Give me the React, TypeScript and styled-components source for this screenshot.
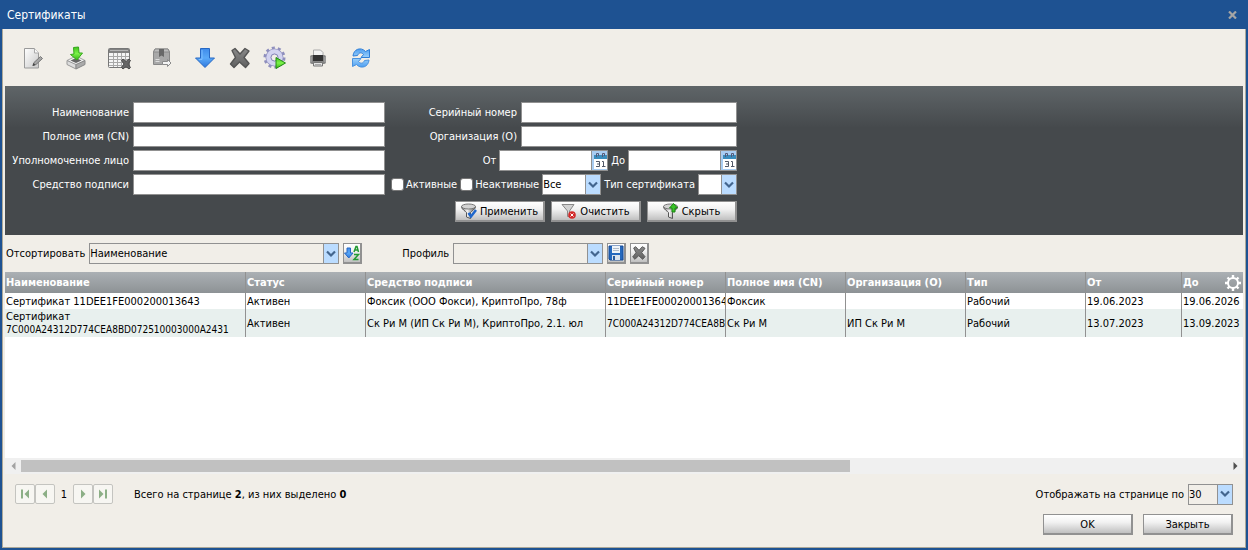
import React from "react";
import styled, { createGlobalStyle, css } from "styled-components";

const GlobalStyle = createGlobalStyle`
  *, *::before, *::after { box-sizing: border-box; }
  body {
    margin: 0;
    background: #1e5292;
    color: #000;
  }
  body, input, select, button, table {
    font-family: Tahoma, "DejaVu Sans Condensed", "Noto Sans", sans-serif;
    font-size: 11px;
    line-height: 13px;
  }
`;

/* ---------- window ---------- */

const Window = styled.div`
  display: flex;
  flex-direction: column;
  min-height: 100vh;
  padding: 0 2px 2px;
  background: #1e5292;
`;

const TitleBar = styled.header`
  display: flex;
  align-items: center;
  justify-content: space-between;
  height: 29px;
  padding: 0 9px 0 5px;
  color: #fff;
`;

const Title = styled.h1`
  margin: 0;
  font-size: 12px;
  line-height: 16px;
  font-weight: normal;
`;

const CloseButton = styled.button`
  display: flex;
  padding: 0;
  border: 0;
  background: none;
`;

const Content = styled.main`
  display: flex;
  flex: 1;
  flex-direction: column;
  padding: 0 2px;
  border: 1px solid #aca899;
  border-top: 0;
  background: #f1eee8;
`;

/* ---------- toolbar ---------- */

const Toolbar = styled.div`
  display: flex;
  align-items: center;
  height: 57px;
  padding-left: 16px;
`;

const ToolGroup = styled.div<{ $step: number; $after: number }>`
  display: grid;
  grid-auto-flow: column;
  grid-auto-columns: ${(p) => p.$step}px;
  margin-right: ${(p) => p.$after}px;
`;

const ToolButton = styled.button`
  display: flex;
  width: 24px;
  height: 24px;
  padding: 0;
  border: 0;
  background: none;
`;

/* ---------- filter ---------- */

const FilterPanel = styled.form`
  display: flex;
  align-items: flex-start;
  gap: 5px;
  min-height: 149px;
  padding-top: 16px;
  background: linear-gradient(#5f6568, #45494c 42px);
  color: #fff;
`;

const FilterColumn = styled.div<{ $width: number }>`
  display: flex;
  flex-direction: column;
  gap: 3px;
  width: ${(p) => p.$width}px;
`;

const FilterRow = styled.div<{ $gap?: number }>`
  display: flex;
  align-items: center;
  justify-content: flex-end;
  gap: ${(p) => p.$gap ?? 4}px;
  height: 21px;
`;

const Label = styled.label`
  white-space: nowrap;
`;

const TextInput = styled.input<{ $width: number }>`
  width: ${(p) => p.$width}px;
  height: 21px;
  padding: 0 1px;
  border: 1px solid #919191;
  border-radius: 0;
  background: #fff;
`;

const DateBox = styled.span`
  display: flex;
  width: 109px;
  height: 21px;
  border: 1px solid #919191;
  background: #fff;
`;

const DateInput = styled.input`
  flex: 1;
  min-width: 0;
  padding: 0 1px;
  border: 0;
  background: none;
`;

const DateButton = styled.button`
  display: flex;
  width: 16px;
  padding: 0;
  border: 0;
  border-left: 1px solid #919191;
  background: #a9cdf2;
`;

const CheckLabel = styled.label`
  display: flex;
  align-items: center;
  gap: 2px;
  white-space: nowrap;
`;

const CheckBox = styled.input`
  appearance: none;
  width: 13px;
  height: 13px;
  margin: 0;
  border: 1px solid #767676;
  border-radius: 3px;
  background: #fff;
`;

const SelectBox = styled.span<{ $width: number }>`
  position: relative;
  display: flex;
  width: ${(p) => p.$width}px;
  height: 21px;
`;

const NativeSelect = styled.select<{ $white?: boolean }>`
  appearance: none;
  width: 100%;
  padding: 0 17px 0 0;
  border: 1px solid #919191;
  border-radius: 0;
  background: ${(p) => (p.$white ? "#fff" : "#f1eee8")};
  color: #000;
`;

const SelectArrow = styled.span`
  position: absolute;
  top: 0;
  right: 0;
  display: flex;
  align-items: center;
  justify-content: center;
  width: 16px;
  height: 21px;
  border: 1px solid #919191;
  background: #bbdcff;
  pointer-events: none;
`;

const ButtonRow = styled.div`
  display: flex;
  justify-content: flex-end;
  gap: 6px;
  padding-top: 3px;
`;

const PushButton = styled.button`
  display: flex;
  align-items: center;
  justify-content: center;
  gap: 3px;
  width: 90px;
  height: 21px;
  padding: 0;
  border: solid #919191;
  border-width: 1px 2px 2px 1px;
  background: linear-gradient(#fff, #f2f2f2 40%, #c0c0c0);
  color: #000;
  white-space: nowrap;
`;

const IconButton = styled(PushButton)`
  width: 19px;
`;

/* ---------- sorting ---------- */

const SortBar = styled.div`
  display: flex;
  align-items: center;
  height: 37px;
`;

const SortGroup = styled.div`
  display: flex;
  align-items: center;
  gap: 4px;
  margin-right: 39px;
  padding-left: 1px;
`;

/* ---------- table ---------- */

const TableArea = styled.section`
  position: relative;
  flex: 1;
  overflow: hidden;
  background: #fff;
`;

const Table = styled.table`
  width: 100%;
  table-layout: fixed;
  border-collapse: separate;
  border-spacing: 0;
`;

const cellBase = css`
  padding: 0 0 0 1px;
  border-right: 1px solid #919191;
  overflow: hidden;
  text-align: left;
  white-space: nowrap;
  &:last-child { border-right: 0; }
`;

const HeadCell = styled.th`
  ${cellBase}
  height: 21px;
  color: #fff;
  font-weight: bold;
`;

const HeadRow = styled.tr`
  background: linear-gradient(#abb0b4, #8d9295);
`;

const BodyRow = styled.tr<{ $tall?: boolean }>`
  height: ${(p) => (p.$tall ? 28 : 16)}px;
  background: ${(p) => (p.$tall ? "#e8f0ee" : "#fff")};
`;

const Cell = styled.td<{ $wrap?: boolean }>`
  ${cellBase}
  ${(p) => p.$wrap && "white-space: normal;"}
`;

const Serial = styled.span<{ $long?: boolean }>`
  font-size: ${(p) => (p.$long ? 10 : 11)}px;
`;

const SettingsButton = styled.button`
  position: absolute;
  top: 2px;
  right: 1px;
  display: flex;
  padding: 0;
  border: 0;
  background: none;
`;

const ScrollBar = styled.div`
  display: grid;
  grid-template-columns: 16px 1fr 16px;
  align-items: center;
  height: 16px;
  background: #f0f0f0;
`;

const ScrollButton = styled.button`
  display: flex;
  align-items: center;
  justify-content: center;
  height: 16px;
  padding: 0;
  border: 0;
  background: none;
`;

const ScrollThumb = styled.div`
  width: 68.75%;
  height: 12px;
  background: #c1c1c1;
`;

/* ---------- footer ---------- */

const Footer = styled.footer`
  display: flex;
  align-items: center;
  justify-content: space-between;
  height: 40px;
  padding: 0 10px;
`;

const FooterGroup = styled.div`
  display: flex;
  align-items: center;
  gap: 4px;
`;

const Pager = styled.nav`
  display: flex;
  align-items: center;
  margin-right: 17px;
`;

const PageButton = styled.button`
  display: flex;
  align-items: center;
  justify-content: center;
  width: 20px;
  height: 20px;
  padding: 0;
  border: 1px solid #c4c4c0;
  border-radius: 2px;
  background: #f7f6f2;
`;

const PageNumber = styled.span`
  width: 18px;
  text-align: center;
`;

const Actions = styled.div`
  display: flex;
  justify-content: flex-end;
  gap: 10px;
  height: 33px;
  padding-right: 10px;
`;

/* ---------- icons ---------- */

const Svg = ({ w = 24, h = w, box, children }: { w?: number; h?: number; box?: string; children: React.ReactNode }) => (
  <svg width={w} height={h} viewBox={box ?? `0 0 ${w} ${h}`} aria-hidden="true">{children}</svg>
);

const HiddenSvg = styled.svg`
  position: absolute;
`;

const Gradients = () => (
  <HiddenSvg width="0" height="0" aria-hidden="true">
    <defs>
      <linearGradient id="gBlue" x1="0" y1="0" x2="0" y2="1"><stop offset="0" stopColor="#3f8bea" /><stop offset=".5" stopColor="#5aa9f8" /><stop offset="1" stopColor="#2e78dd" /></linearGradient>
      <linearGradient id="gSky" x1="0" y1="0" x2="0" y2="1"><stop offset="0" stopColor="#4c9df0" /><stop offset="1" stopColor="#9bd0fb" /></linearGradient>
      <linearGradient id="gGreen" x1="0" y1="0" x2="0" y2="1"><stop offset="0" stopColor="#3fc41a" /><stop offset=".5" stopColor="#7cf24a" /><stop offset="1" stopColor="#35b414" /></linearGradient>
      <linearGradient id="gPaper" x1="0" y1="0" x2="1" y2="1"><stop offset="0" stopColor="#fff" /><stop offset="1" stopColor="#c9c9c9" /></linearGradient>
      <linearGradient id="gMetal" x1="0" y1="0" x2="1" y2="0"><stop offset="0" stopColor="#777" /><stop offset=".4" stopColor="#f5f5f5" /><stop offset="1" stopColor="#555" /></linearGradient>
      <linearGradient id="gDark" x1="0" y1="0" x2="0" y2="1"><stop offset="0" stopColor="#8a8a8a" /><stop offset="1" stopColor="#606060" /></linearGradient>
    </defs>
  </HiddenSvg>
);

const EditIcon = () => (
  <Svg>
    <path d="M3.500 2.500h10l4 4v15.500h-14z" fill="url(#gPaper)" stroke="#9a9a9a" />
    <path d="M13.500 2.500v4.500h4.500" fill="#f8f8f8" stroke="#aaa" />
    <path d="M12 19.500l1-3 6.500-6 2 2-6.500 6z" fill="#a6a6a6" stroke="#777" />
    <path d="M11.500 20l1-3 2 2z" fill="#444" />
  </Svg>
);

const ImportIcon = () => (
  <Svg>
    <path d="M3 14.500l9-4.500 9 4.500-9 5z" fill="#f2f2f2" stroke="#a4a4a4" />
    <path d="M3 14.500v4l9 4.500v-4.500z" fill="#ddd" stroke="#999" />
    <path d="M21 14.500v4l-9 4.500v-4.500z" fill="#aaa" stroke="#888" />
    <path d="M6.500 14.500l5.500-2.500 5.500 2.500-5.500 2.500z" fill="#666" />
    <path d="M9.500 1.500l5-.5.500 6h3.500l-5.500 7-6.500-5.500 3.500-.5z" fill="url(#gGreen)" stroke="#34a61b" />
  </Svg>
);

const TableDeleteIcon = () => (
  <Svg>
    <rect x="1.500" y="2.500" width="21" height="19" rx="1" fill="#f5f5f5" stroke="#777" />
    <path d="M2 3h20v4H2z" fill="#828282" /><path d="M3 4.500h18" stroke="#b5b5b5" />
    <path d="M2 10.500h20M2 13.500h20M2 16.500h20M2 19.500h20M6.500 7v14M10.500 7v14M14.500 7v14M18.500 7v14" stroke="#a8a8a8" />
    <path d="M14.500 14.500l1.500-1.500 3 2.500 3-2.500 1.500 1.500-2.500 3.500 2.500 3.500-1.500 1.500-3-2.500-3 2.500-1.500-1.500 2.500-3.500z" fill="#666" stroke="#4c4c4c" />
  </Svg>
);

const PackageIcon = () => (
  <Svg>
    <path d="M5 3h13l1.500 3v12.500H3.500V6z" fill="#a8a8a8" stroke="#888" />
    <path d="M5 3h13l1.500 3h-16z" fill="#bdbdbd" stroke="#8c8c8c" />
    <path d="M9 3h5v8l-2.500-1.500L9 11z" fill="#686868" />
    <path d="M5.500 13.500h4M5.500 15.500h4" stroke="#ddd" />
    <path d="M12.500 15.500h5v-2l3.500 3.500-3.500 3.500v-2h-5z" fill="#f4f4f4" stroke="#8a8a8a" />
  </Svg>
);

const DownIcon = () => (
  <Svg><path d="M7.500 2.500h9v9.500h5L12 21.500 2.500 12h5z" fill="url(#gBlue)" stroke="#2768c4" /><path d="M9 4v9.500H6" fill="none" stroke="#7dbdff" /></Svg>
);

const CrossIcon = ({ w = 24 }: { w?: number }) => (
  <Svg w={w} box="0 0 24 24">
    <path d="M4 4.500l3-2 5 5.500 5-5.500 4 2.500-5 6.500 5 6-3.500 4-6-5.500-5.500 5.500-3.500-3.500 5-6.500z" fill="url(#gDark)" stroke="#555" strokeWidth="1.400" strokeLinejoin="round" />
  </Svg>
);

const GearRunIcon = () => (
  <Svg>
    <circle cx="11.500" cy="11.500" r="9.500" fill="none" stroke="#8f8fbd" strokeWidth="3" strokeDasharray="3 2.970" />
    <circle cx="11.500" cy="11.500" r="6" fill="none" stroke="#9292c0" strokeWidth="6" />
    <circle cx="11.500" cy="11.500" r="6" fill="none" stroke="#d3d3f0" strokeWidth="4.500" />
    <circle cx="11.500" cy="11.500" r="3.500" fill="#f1eee8" stroke="#8888b8" />
    <path d="M13 11.500l9.500 5.500-9.500 5.500z" fill="url(#gGreen)" stroke="#248a16" />
  </Svg>
);

const PrintIcon = () => (
  <Svg>
    <path d="M7.500 4h7l2.500 2.500V11h-9.500z" fill="#f3f3f3" stroke="#aaa" />
    <rect x="4" y="9" width="16" height="9" rx="2" fill="#858585" />
    <rect x="7" y="9" width="10" height="6" fill="#333" />
    <path d="M5 11v5M19 11v5" stroke="#b0b0b0" />
    <path d="M7.500 16.500h9v3.500h-9z" fill="#e3e3e3" stroke="#777" /><path d="M9 18.500h6" stroke="#aaa" />
  </Svg>
);

const refreshArrow = "M4 10C4.500 3 12 .5 16.500 5.500L20.500 3.500V11.500H12L14.500 8.500C12 5.500 9.500 7 8.500 9.500z";

const RefreshIcon = () => (
  <Svg>
    <path d={refreshArrow} fill="url(#gSky)" stroke="#2f7fd8" />
    <path d={refreshArrow} transform="rotate(180 12 12)" fill="url(#gSky)" stroke="#4a92de" />
  </Svg>
);

const CalendarIcon = () => (
  <Svg w={15} h={19}>
    <path d="M2 4h13v14H2z" fill="#fff" /><path d="M2 4h13v4H2z" fill="#3b8dbd" />
    <path d="M4.500 6V2.500h2V5M10.500 6V2.500h2V5" fill="none" stroke="#555a78" />
    <path d="M4 10.500h3.500v5H4M5 13h2.500M10 10.500h1.500v5M10 15.500h3.500" fill="none" stroke="#505868" />
  </Svg>
);

const Chevron = () => (
  <Svg w={10} h={8}><path d="M1 1.500l4 4 4-4" fill="none" stroke="#43668f" strokeWidth="2.200" /></Svg>
);

const FunnelIcon = ({ kind }: { kind: "apply" | "clear" | "hide" }) => (
  <Svg w={16}>
    {kind === "clear" ? (
      <path d="M1 1.500h12L8.500 8v5.500h-2V8z" fill="#d2d2d2" stroke="#888" />
    ) : (
      <>
        <path d="M.5 3.500c0 3 4.500 5 5 6v4.500l4 1.500V9.500c1-1.500 5-3 5-6z" fill="url(#gMetal)" stroke="#555" />
        <ellipse cx="7.500" cy="3.500" rx="7" ry="2.500" fill="#d4d4d4" stroke="#777" />
      </>
    )}
    {kind === "apply" && <path d="M7.500 10l2.500 3.500 5-6.500" fill="none" stroke="#1d66cc" strokeWidth="2.500" />}
    {kind === "clear" && <><circle cx="11" cy="12" r="3.800" fill="#d22a2a" /><path d="M9.500 10.500l3 3M12.500 10.500l-3 3" stroke="#fff" /></>}
    {kind === "hide" && <path d="M10.500 .5l4 4.500h-2.500v4H9V5H6.500z" fill="#39c427" stroke="#1b8413" />}
  </Svg>
);

const SortIcon = () => (
  <Svg w={16}>
    <path d="M3 3h3.500v5h2.500l-4.200 5L.5 8H3z" fill="url(#gBlue)" stroke="#2768c4" />
    <path d="M10 7l2-5.500h1L14.500 7M11 5h3M10 9.500h4.500L10 14.500h4.500" fill="none" stroke="#239a33" strokeWidth="1.500" />
  </Svg>
);

const SaveIcon = () => (
  <Svg w={16}>
    <path d="M1 1h14v14H2l-1-1z" fill="#2468bd" stroke="#164b96" /><path d="M4 1h8v7H4z" fill="#eef3f8" />
    <path d="M5 3.500h6M5 5.500h6" stroke="#aebac8" /><path d="M4 10h8v5H4z" fill="#d9e2ec" /><path d="M5 11h2v4H5z" fill="#285a9b" />
  </Svg>
);

const SettingsIcon = () => (
  <Svg w={18}>
    <circle cx="9" cy="9" r="5" fill="none" stroke="#fff" strokeWidth="2" />
    <path d="M9 4V1M9 17v-3M4 9H1M17 9h-3M5.500 5.500l-2-2M14.500 14.500l-2-2M12.500 5.500l2-2M3.500 14.500l2-2" stroke="#fff" strokeWidth="2.400" />
  </Svg>
);

const PageArrow = ({ back, edge }: { back?: boolean; edge?: boolean }) => (
  <Svg w={10}>
    <g transform={back ? "translate(10 0) scale(-1 1)" : undefined}>
      <path d={edge ? "M1 .500l4.500 4.500L1 9.500z" : "M3 .500l4.500 4.500L3 9.500z"} fill="#8caf86" />
      {edge && <path d="M8 .500v9" stroke="#8caf86" strokeWidth="2" />}
    </g>
  </Svg>
);

const ScrollArrow = ({ back }: { back?: boolean }) => (
  <Svg w={5} h={8}><path d={back ? "M4.500 0v8L.5 4z" : "M.5 0v8l4-4z"} fill={back ? "#a3a3a3" : "#505050"} /></Svg>
);

/* ---------- composed controls ---------- */

type SelectProps = { id: string; width: number; options: string[]; white?: boolean; label?: string };

const Select = ({ id, width, options, white, label }: SelectProps) => (
  <SelectBox $width={width}>
    <NativeSelect id={id} $white={white} aria-label={label}>
      {options.map((o) => <option key={o}>{o}</option>)}
    </NativeSelect>
    <SelectArrow><Chevron /></SelectArrow>
  </SelectBox>
);

const DateField = ({ id, label }: { id: string; label: string }) => (
  <>
    <Label htmlFor={id}>{label}</Label>
    <DateBox>
      <DateInput id={id} />
      <DateButton type="button" aria-label="Календарь"><CalendarIcon /></DateButton>
    </DateBox>
  </>
);

const nameFields = ["Наименование", "Полное имя (CN)", "Уполномоченное лицо", "Средство подписи"];
const numberFields = ["Серийный номер", "Организация (О)"];

const toolGroups = [
  { step: 43, after: 0, tools: [["Изменить", EditIcon], ["Импорт", ImportIcon], ["Убрать из списка", TableDeleteIcon], ["Экспорт", PackageIcon]] },
  { step: 35, after: 8, tools: [["Скачать", DownIcon], ["Удалить", CrossIcon], ["Выполнить", GearRunIcon]] },
  { step: 43, after: 0, tools: [["Печать", PrintIcon], ["Обновить", RefreshIcon]] },
] as { step: number; after: number; tools: [string, React.ComponentType][] }[];

const columns: [string, number?][] = [
  ["Наименование", 241], ["Статус", 120], ["Средство подписи", 240], ["Серийный номер", 120],
  ["Полное имя (CN)", 120], ["Организация (О)", 120], ["Тип", 120], ["От", 96], ["До"],
];

const certificates = [
  { serial: "11DEE1FE000200013643", rest: ["Фоксик", "", "Рабочий", "19.06.2023", "19.06.2026"], tool: "Фоксик (ООО Фокси), КриптоПро, 78ф" },
  { serial: "7C000A24312D774CEA8BD072510003000A2431", rest: ["Ск Ри М", "ИП Ск Ри М", "Рабочий", "13.07.2023", "13.09.2023"], tool: "Ск Ри М (ИП Ск Ри М), КриптоПро, 2.1. юл" },
];

export default function App() {
  return (
    <Window>
      <GlobalStyle />
      <Gradients />
      <TitleBar>
        <Title>Сертификаты</Title>
        <CloseButton aria-label="Закрыть окно">
          <Svg w={9} h={8}><path d="M1 .500l7 7M8 .500l-7 7" stroke="#a5a5a5" strokeWidth="2.200" /></Svg>
        </CloseButton>
      </TitleBar>
      <Content>
        <Toolbar>
          {toolGroups.map((g) => (
            <ToolGroup key={g.tools[0][0]} $step={g.step} $after={g.after}>
              {g.tools.map(([name, Icon]) => <ToolButton key={name} aria-label={name}><Icon /></ToolButton>)}
            </ToolGroup>
          ))}
        </Toolbar>

        <FilterPanel onSubmit={(e) => e.preventDefault()}>
          <FilterColumn $width={380}>
            {nameFields.map((name, i) => (
              <FilterRow key={name}>
                <Label htmlFor={`name-${i}`}>{name}</Label>
                <TextInput id={`name-${i}`} $width={252} />
              </FilterRow>
            ))}
          </FilterColumn>
          <FilterColumn $width={347}>
            {numberFields.map((name, i) => (
              <FilterRow key={name}>
                <Label htmlFor={`number-${i}`}>{name}</Label>
                <TextInput id={`number-${i}`} $width={216} />
              </FilterRow>
            ))}
            <FilterRow $gap={3}>
              <DateField id="from" label="От" />
              <DateField id="to" label="До" />
            </FilterRow>
            <FilterRow $gap={3}>
              <CheckLabel><CheckBox type="checkbox" />Активные</CheckLabel>
              <CheckLabel><CheckBox type="checkbox" />Неактивные</CheckLabel>
              <Select id="state" label="Состояние" width={59} options={["Все"]} white />
              <Label htmlFor="kind">Тип сертификата</Label>
              <Select id="kind" width={39} options={[""]} white />
            </FilterRow>
            <ButtonRow>
              <PushButton><FunnelIcon kind="apply" />Применить</PushButton>
              <PushButton type="button"><FunnelIcon kind="clear" />Очистить</PushButton>
              <PushButton type="button"><FunnelIcon kind="hide" />Скрыть</PushButton>
            </ButtonRow>
          </FilterColumn>
        </FilterPanel>

        <SortBar>
          <SortGroup>
            <Label htmlFor="sort">Отсортировать</Label>
            <Select id="sort" width={250} options={["Наименование"]} />
            <IconButton aria-label="Направление сортировки"><SortIcon /></IconButton>
          </SortGroup>
          <SortGroup>
            <Label htmlFor="profile">Профиль</Label>
            <Select id="profile" width={150} options={[""]} />
            <IconButton aria-label="Сохранить профиль"><SaveIcon /></IconButton>
            <IconButton aria-label="Удалить профиль"><CrossIcon w={16} /></IconButton>
          </SortGroup>
        </SortBar>

        <TableArea>
          <Table>
            <colgroup>{columns.map(([name, width]) => <col key={name} width={width} />)}</colgroup>
            <thead>
              <HeadRow>{columns.map(([name]) => <HeadCell key={name}>{name}</HeadCell>)}</HeadRow>
            </thead>
            <tbody>
              {certificates.map((c, r) => (
                <BodyRow key={c.serial} $tall={r === 1}>
                  <Cell $wrap>Сертификат <Serial $long={c.serial.length > 30}>{c.serial}</Serial></Cell>
                  <Cell>Активен</Cell>
                  <Cell>{c.tool}</Cell>
                  <Cell><Serial $long={c.serial.length > 30}>{c.serial}</Serial></Cell>
                  {c.rest.map((text, i) => <Cell key={i}>{text}</Cell>)}
                </BodyRow>
              ))}
            </tbody>
          </Table>
          <SettingsButton aria-label="Настройка столбцов"><SettingsIcon /></SettingsButton>
        </TableArea>
        <ScrollBar>
          <ScrollButton aria-label="Влево"><ScrollArrow back /></ScrollButton>
          <ScrollThumb />
          <ScrollButton aria-label="Вправо"><ScrollArrow /></ScrollButton>
        </ScrollBar>

        <Footer>
          <FooterGroup>
            <Pager>
              <PageButton aria-label="Первая"><PageArrow back edge /></PageButton>
              <PageButton aria-label="Предыдущая"><PageArrow back /></PageButton>
              <PageNumber>1</PageNumber>
              <PageButton aria-label="Следующая"><PageArrow /></PageButton>
              <PageButton aria-label="Последняя"><PageArrow edge /></PageButton>
            </Pager>
            <span>Всего на странице <b>2</b>, из них выделено <b>0</b></span>
          </FooterGroup>
          <FooterGroup>
            <Label htmlFor="size">Отображать на странице по</Label>
            <Select id="size" width={45} options={["30"]} />
          </FooterGroup>
        </Footer>
        <Actions>
          <PushButton>OK</PushButton>
          <PushButton>Закрыть</PushButton>
        </Actions>
      </Content>
    </Window>
  );
}
